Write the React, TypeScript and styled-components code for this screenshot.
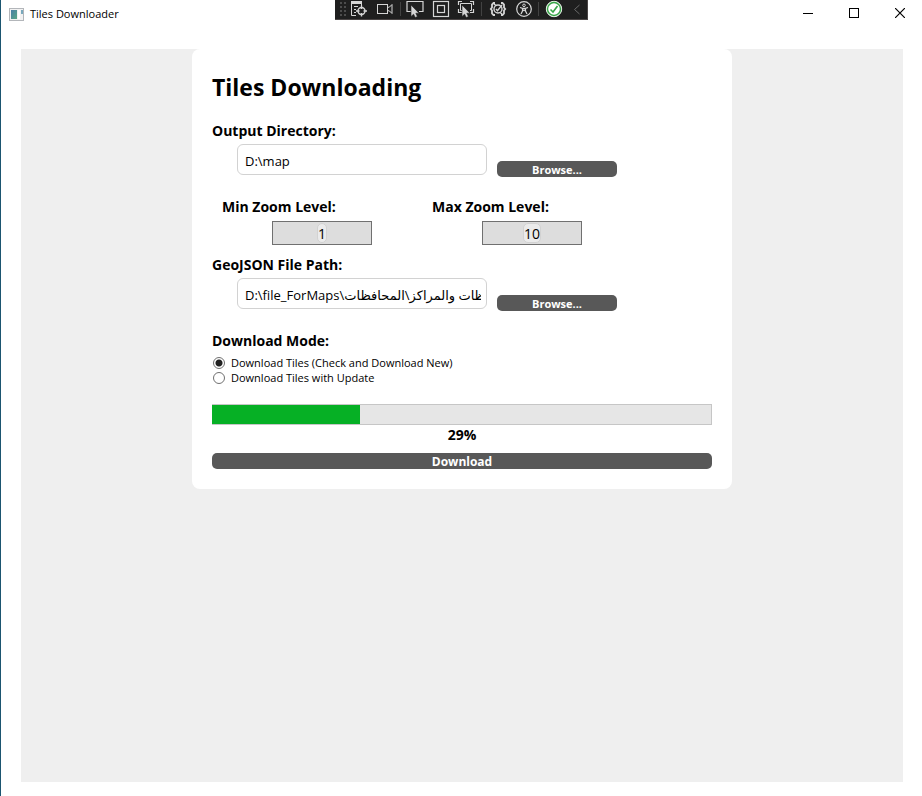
import React, { useState } from "react";
import styled, { createGlobalStyle } from "styled-components";

const GlobalStyle = createGlobalStyle`
  *, *::before, *::after { box-sizing: border-box; }
  html, body, #root { height: 100%; }
  body {
    margin: 0;
    background: #fff;
    color: #000;
    font-family: "Open Sans", "Noto Sans", "DejaVu Sans", sans-serif;
    font-size: 14px;
  }
  button, input { font-family: inherit; }
`;

const Window = styled.div`
  display: flex;
  flex-direction: column;
  min-height: 100%;
  border-left: 1px solid #1b5570;
`;

const TitleBar = styled.header`
  display: flex;
  align-items: center;
  height: 28px;
  padding-left: 8px;
`;

const AppName = styled.span`
  flex: 1;
  margin-left: 6px;
  font-size: 11px;
  line-height: 16px;
`;

const WindowControls = styled.div`
  display: flex;
  align-self: flex-start;
  margin-right: -1px;
`;

const WindowButton = styled.button`
  display: flex;
  align-items: center;
  justify-content: center;
  width: 46px;
  height: 26px;
  padding: 0;
  border: 0;
  background: transparent;
`;

const DebugBar = styled.div`
  position: absolute;
  top: 0;
  left: 50%;
  display: flex;
  align-items: flex-start;
  width: 253px;
  height: 20px;
  margin-left: -126px;
  padding: 1px 0 0 4px;
  background: #1f1f1f;
  border: solid #4a4545;
  border-width: 0 1px 1px 0;
`;

const Grip = styled.span`
  width: 8px;
  height: 17px;
  background-image: radial-gradient(#4c4c4c 1px, transparent 1px);
  background-size: 4px 4px;
`;

const DebugButton = styled.button<{ $width?: number }>`
  display: flex;
  align-items: center;
  justify-content: center;
  width: ${(p) => p.$width ?? 26}px;
  height: 16px;
  padding: 0;
  border: 0;
  background: transparent;
`;

const Separator = styled.span`
  width: 1px;
  height: 14px;
  margin: 1px 2px;
  background: #424242;
`;

const Content = styled.main`
  display: flex;
  flex: 1;
  margin: 21px 19px 14px 20px;
  align-items: flex-start;
  justify-content: center;
  background: #efefef;
`;

const Card = styled.form`
  width: 100%;
  max-width: 540px;
  padding: 20px;
  border-radius: 8px;
  background: #fff;
`;

const Heading = styled.h1`
  margin: 0 0 16px;
  font-size: 23px;
  line-height: 36px;
  font-weight: 700;
`;

const Label = styled.label`
  display: block;
  font-size: 14px;
  line-height: 20px;
  font-weight: 700;
`;

const PathRow = styled.div`
  display: flex;
  align-items: flex-end;
  gap: 10px;
  padding: 3px 0 0 25px;
  margin-bottom: 20px;
`;

const PathInput = styled.input`
  width: 250px;
  height: 31px;
  margin-bottom: 2px;
  padding: 2px 5px 0 7px;
  border: 1px solid #d2d2d2;
  border-radius: 6px;
  background: #fff;
  color: #000;
  font-size: 13px;
`;

const ActionButton = styled.button<{ $wide?: boolean }>`
  display: block;
  width: ${(p) => (p.$wide ? "100%" : "120px")};
  height: 16px;
  padding: 1px 0 0;
  border: 0;
  border-radius: 5px;
  background: #585858;
  color: #fff;
  font-size: ${(p) => (p.$wide ? "12px" : "11px")};
  line-height: 16px;
  font-weight: 700;
`;

const ZoomRow = styled.div`
  display: flex;
  gap: 60px;
  padding-left: 10px;
  margin-bottom: 10px;
`;

const ZoomField = styled.div`
  width: 150px;
`;

const ZoomBox = styled.div`
  display: flex;
  align-items: center;
  justify-content: center;
  width: 100px;
  height: 24px;
  margin: 4px 0 0 50px;
  border: 1px solid #707070;
  background: #ddd;
`;

const ZoomInput = styled.input<{ $digits: number }>`
  width: ${(p) => p.$digits * 8 + 2}px;
  height: 20px;
  padding: 0;
  border: 1px solid #d2d2d2;
  border-radius: 5px;
  background: #ebebeb;
  color: #000;
  font-size: 14px;
  text-align: center;
`;

const ModeGroup = styled.fieldset`
  margin: 0 0 19px;
  padding: 0;
  border: 0;
`;

const ModeTitle = styled.legend`
  padding: 0;
  margin-bottom: 4px;
  font-size: 14px;
  line-height: 20px;
  font-weight: 700;
`;

const ModeOption = styled.label`
  display: flex;
  align-items: center;
  gap: 6px;
  height: 15px;
  padding-left: 1px;
  font-size: 11px;
  line-height: 15px;
`;

const Radio = styled.input`
  appearance: none;
  width: 12px;
  height: 12px;
  margin: 0;
  border: 1px solid #707070;
  border-radius: 50%;
  background: #fff;
  &:checked {
    background: radial-gradient(circle, #212121 0 3px, #fff 4px);
  }
`;

const Progress = styled.progress`
  appearance: none;
  display: block;
  width: 100%;
  height: 21px;
  border: 1px solid #c6c6c6;
  border-left: 0;
  background: #e6e6e6;
  &::-webkit-progress-bar { background: #e6e6e6; }
  &::-webkit-progress-value { background: #06b025; }
`;

const Percent = styled.output`
  display: block;
  margin-bottom: 8px;
  font-size: 14px;
  line-height: 20px;
  font-weight: 700;
  text-align: center;
`;

const Icon = ({ children }: { children: React.ReactNode }) => (
  <svg width="16" height="16" viewBox="0 0 16 16" fill="none" stroke="#d6d6d6" strokeWidth="1" overflow="visible">
    {children}
  </svg>
);

const Cursor = () => (
  <path d="M4 4v11.500l2.600-2.300 1.600 3.300 2.200-1-1.600-3.300H12z" fill="#d6d6d6" stroke="#1f1f1f" strokeWidth=".6" />
);

const AppIcon = () => (
  <svg width="15" height="13" viewBox="0 0 15 13">
    <defs>
      <linearGradient id="pane" x1="0" y1="0" x2="1" y2="1">
        <stop offset="0" stopColor="#4a7fa8" />
        <stop offset="1" stopColor="#5aa885" />
      </linearGradient>
    </defs>
    <rect x=".5" y=".5" width="14" height="12" fill="#f2f2f2" stroke="#b3b6ba" />
    <rect x="2" y="2" width="6" height="9" fill="url(#pane)" />
    <rect x="9" y="2" width="2" height="9" fill="#fff" />
    <rect x="12" y="2" width="2" height="4" fill="#79a9bd" />
  </svg>
);

const DebugToolbar = () => (
  <DebugBar role="toolbar" aria-label="Debugging tools">
    <Grip />
    <DebugButton type="button" aria-label="Live visual tree">
      <Icon>
        <path d="M0 1.500h11" strokeWidth="3" />
        <path d="M.5 3v11.500H5M3 5.500h4M3 8.500h2M3 11.500h2M10.500 3v2" />
        <circle cx="10.500" cy="10" r="3.500" strokeWidth="1.400" />
        <path d="M10.500 4.500V8M10.500 12v3.500M5 10h3.500M12.500 10H16" strokeWidth="1.400" />
      </Icon>
    </DebugButton>
    <DebugButton type="button" aria-label="Record">
      <Icon>
        <rect x=".5" y="3.500" width="10" height="9" />
        <path d="M10.500 6.500l2-.5 2.500-2.500v9L12.500 10l-2-.5" />
      </Icon>
    </DebugButton>
    <Separator />
    <DebugButton type="button" aria-label="Select element">
      <Icon>
        <path d="M4 10.500H0V.5h16v10h-4" strokeWidth="1.200" />
        <Cursor />
      </Icon>
    </DebugButton>
    <DebugButton type="button" aria-label="Layout adorners">
      <Icon>
        <rect x=".5" y=".5" width="15" height="15" strokeWidth="1.200" />
        <rect x="4.500" y="4.500" width="7" height="7" strokeWidth="1.200" />
      </Icon>
    </DebugButton>
    <DebugButton type="button" aria-label="Track focused element">
      <Icon>
        <path d="M.5 4V.5H4M12 .5h3.500V4M.5 8v3.500H4M12 11.500h3.500V8" strokeWidth="1.200" />
        <path d="M4 9.500H2.500v-7h11v7H12" />
        <Cursor />
      </Icon>
    </DebugButton>
    <Separator />
    <DebugButton type="button" $width={30} aria-label="Hot Reload status">
      <Icon>
        <path d="M5 2H3.500L2 3.500v3L.8 8 2 9.500v3L3.500 14H5M11 2h1.500L14 3.500v3L15.200 8 14 9.500v3L12.500 14H11" strokeWidth="1.800" />
        <circle cx="8" cy="8" r="4" strokeWidth="1.400" />
        <path d="M6 8l1.500 1.700L12 4M4 3l2 1.500M12 13l-2-1.500" strokeWidth="1.400" />
      </Icon>
    </DebugButton>
    <DebugButton type="button" $width={24} aria-label="Accessibility checker">
      <Icon>
        <circle cx="8" cy="8" r="7.300" strokeWidth="1.200" />
        <circle cx="8" cy="4.300" r="1.300" />
        <path d="M4 6.500l2.500.8h3l2.500-.8M6.500 7.300V10L5 13M9.500 7.300V10L11 13M6.500 10L8 9l1.500 1" strokeWidth="1.200" />
      </Icon>
    </DebugButton>
    <Separator />
    <DebugButton type="button" aria-label="Hot Reload">
      <Icon>
        <circle cx="8" cy="8" r="7.700" fill="#f4fff4" stroke="#e8f5e8" />
        <circle cx="8" cy="8" r="6.500" fill="#fff" stroke="#37a447" strokeWidth="1.400" />
        <path d="M4.500 8.500L7 11l4.500-6" stroke="#37a447" strokeWidth="1.600" />
      </Icon>
    </DebugButton>
    <DebugButton type="button" aria-label="Collapse toolbar" $width={21}>
      <Icon>
        <path d="M10.500 4L5.500 8.500l5 4.500" stroke="#696969" />
      </Icon>
    </DebugButton>
  </DebugBar>
);

export default function App() {
  const [output, setOutput] = useState("D:\\map");
  const [geo, setGeo] = useState("D:\\file_ForMaps\\المحافظات والمراكز\\المحافظات");
  const [minZoom, setMinZoom] = useState("1");
  const [maxZoom, setMaxZoom] = useState("10");
  const [mode, setMode] = useState("new");
  const progress = 29;

  return (
    <>
      <GlobalStyle />
      <Window>
        <TitleBar>
          <AppIcon />
          <AppName>Tiles Downloader</AppName>
          <WindowControls>
            <WindowButton type="button" aria-label="Minimize">
              <svg width="10" height="10"><path d="M0 5.500h10" stroke="#000" /></svg>
            </WindowButton>
            <WindowButton type="button" aria-label="Maximize">
              <svg width="10" height="10"><rect x=".5" y=".5" width="9" height="9" fill="none" stroke="#000" /></svg>
            </WindowButton>
            <WindowButton type="button" aria-label="Close">
              <svg width="10" height="10"><path d="M0 0l10 10M10 0L0 10" stroke="#000" strokeWidth="1.200" /></svg>
            </WindowButton>
          </WindowControls>
        </TitleBar>
        <DebugToolbar />
        <Content>
          <Card onSubmit={(e) => e.preventDefault()}>
            <Heading>Tiles Downloading</Heading>

            <Label htmlFor="output">Output Directory:</Label>
            <PathRow>
              <PathInput id="output" value={output} onChange={(e) => setOutput(e.target.value)} />
              <ActionButton type="button">Browse...</ActionButton>
            </PathRow>

            <ZoomRow>
              <ZoomField>
                <Label htmlFor="min-zoom">Min Zoom Level:</Label>
                <ZoomBox>
                  <ZoomInput id="min-zoom" $digits={minZoom.length} value={minZoom} onChange={(e) => setMinZoom(e.target.value)} />
                </ZoomBox>
              </ZoomField>
              <ZoomField>
                <Label htmlFor="max-zoom">Max Zoom Level:</Label>
                <ZoomBox>
                  <ZoomInput id="max-zoom" $digits={maxZoom.length} value={maxZoom} onChange={(e) => setMaxZoom(e.target.value)} />
                </ZoomBox>
              </ZoomField>
            </ZoomRow>

            <Label htmlFor="geojson">GeoJSON File Path:</Label>
            <PathRow>
              <PathInput id="geojson" value={geo} onChange={(e) => setGeo(e.target.value)} />
              <ActionButton type="button">Browse...</ActionButton>
            </PathRow>

            <ModeGroup>
              <ModeTitle>Download Mode:</ModeTitle>
              <ModeOption>
                <Radio type="radio" name="mode" checked={mode === "new"} onChange={() => setMode("new")} />
                Download Tiles (Check and Download New)
              </ModeOption>
              <ModeOption>
                <Radio type="radio" name="mode" checked={mode === "update"} onChange={() => setMode("update")} />
                Download Tiles with Update
              </ModeOption>
            </ModeGroup>

            <Progress id="progress" aria-label="Download progress" max={98} value={progress} />
            <Percent htmlFor="progress">{progress}%</Percent>
            <ActionButton type="submit" $wide>Download</ActionButton>
          </Card>
        </Content>
      </Window>
    </>
  );
}
